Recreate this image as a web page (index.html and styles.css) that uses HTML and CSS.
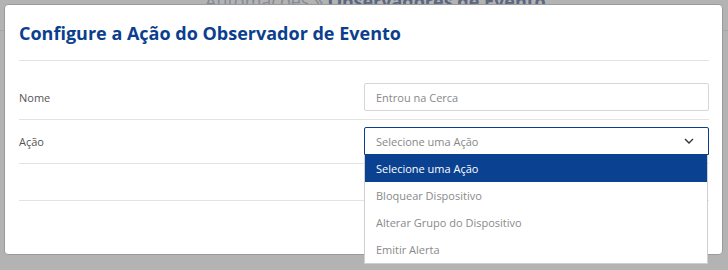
FILE: index.html
```html
<!DOCTYPE html>
<html lang="pt">
<head>
<meta charset="utf-8">
<link rel="stylesheet" href="styles.css">
</head>
<body>
<div class="page">
  <div class="crumb">Automações » <b>Observadores de Evento</b></div>
</div>
<div class="modal">
  <div class="modal-header">
    <h1 class="title">Configure a Ação do Observador de Evento</h1>
  </div>
  <div class="modal-body">
    <div class="row">
      <label class="label">Nome</label>
      <div class="field">
        <div class="input">Entrou na Cerca</div>
      </div>
    </div>
    <div class="row">
      <label class="label">Ação</label>
      <div class="field">
        <div class="select">
          <span>Selecione uma Ação</span>
          <svg class="chev" width="10" height="6" viewBox="0 0 10 6"><path d="M1 1 L5 5 L9 1" fill="none" stroke="#333" stroke-width="1.4"/></svg>
        </div>
        <ul class="menu">
          <li class="opt active">Selecione uma Ação</li>
          <li class="opt">Bloquear Dispositivo</li>
          <li class="opt">Alterar Grupo do Dispositivo</li>
          <li class="opt">Emitir Alerta</li>
        </ul>
      </div>
    </div>
    <div class="row empty"></div>
  </div>
</div>
</body>
</html>
```
FILE: styles.css
```css
html, body {
  margin: 0;
  padding: 0;
}
body {
  width: 728px;
  height: 270px;
  background: #b3b3b3;
  font-family: "Open Sans", "DejaVu Sans", sans-serif;
  position: relative;
  overflow: hidden;
}
.page {
  height: 30px;
  border-bottom: 1px solid #a6a6a6;
}
.crumb {
  position: absolute;
  left: 205px;
  top: -11px;
  font-size: 18px;
  color: #858b93;
}
.crumb b {
  color: #5a6780;
}
.modal {
  position: absolute;
  left: 4px;
  top: 4px;
  width: 690px;
  height: 249px;
  background: #fff;
  border: 1px solid #9a9a9a;
  border-radius: 4px;
  padding: 0 13px 0 14px;
}
.modal-header {
  height: 55px;
  border-bottom: 1px solid #e3e3e3;
  display: flex;
  align-items: center;
}
.title {
  margin: 0;
  font-size: 18px;
  font-weight: 700;
  color: #0b3f8e;
  padding-top: 1px;
}
.modal-body {
  padding-top: 15px;
}
.row {
  display: grid;
  grid-template-columns: 345px 345px;
  align-items: center;
  padding: 7px 0 8px;
  border-bottom: 1px solid #e3e3e3;
  position: relative;
}
.row.empty {
  height: 21px;
}
.label {
  font-size: 11px;
  color: #555;
}
.field {
  position: relative;
}
.input, .select {
  height: 26px;
  border: 1px solid #d6d6d6;
  border-radius: 2px;
  display: flex;
  align-items: center;
  padding: 0 12px 0 11px;
  font-size: 11px;
  color: #888;
}
.select {
  border-color: #0b3f8e;
  justify-content: space-between;
  border-radius: 2px 2px 0 0;
  padding-right: 14px;
}
.menu {
  position: absolute;
  left: 0;
  right: 1px;
  top: 28px;
  margin: 0;
  padding: 0;
  list-style: none;
  background: #fff;
  border: 1px solid #cfcfcf;
  border-top: none;
  z-index: 5;
}
.opt {
  height: 27px;
  display: flex;
  align-items: center;
  padding: 0 11px;
  font-size: 11px;
  color: #8a8a8a;
}
.opt.active {
  background: #0b4191;
  color: #fff;
}
```
